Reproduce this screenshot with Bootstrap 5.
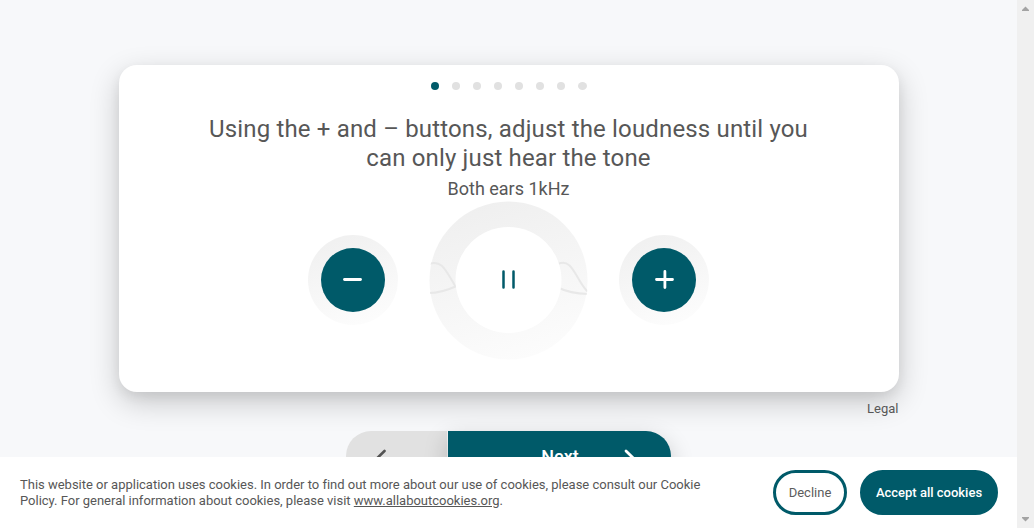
<!DOCTYPE html>
<html lang="en">
<head>
<meta charset="utf-8">
<meta name="viewport" content="width=device-width, initial-scale=1">
<title>Hearing test</title>
<link href="https://cdn.jsdelivr.net/npm/bootstrap@5.3.0/dist/css/bootstrap.min.css" rel="stylesheet">
<style>
  :root { --teal: #005a69; --ink: #575757; --soft: #e1e1e1; }
  body { font-family: Roboto, "Liberation Sans", sans-serif; color: var(--ink); background: #f7f8fa; }
  .stage { min-width: 0; padding-top: 65px; }
  .test-panel { width: 780px; height: 327px; border-radius: 18px; background: #fff; padding-top: 17px; box-shadow: 0 10px 30px rgba(0,0,0,.2), 0 5px 12px rgba(0,0,0,.06); }
  .steps { gap: 13px; height: 8px; }
  .steps span { width: 8px; height: 8px; border-radius: 50%; background: var(--soft); }
  .steps span:last-child { width: 9px; }
  .steps .current { background: var(--teal); }
  .test-title { width: 640px; margin-top: 25px; font-size: 24px; line-height: 29px; font-weight: 400; letter-spacing: .16px; }
  .test-sub { font-size: 18px; line-height: 22px; margin-top: 5px; }
  .controls { gap: 31px; margin-top: 1px; }
  .halo { width: 90px; height: 90px; margin-bottom: 1px; background: linear-gradient(160deg, #efefef, #fefefe); }
  .round-btn { width: 64px; height: 64px; background: var(--teal); }
  .legal { width: 780px; font-size: 13px; line-height: 16px; margin-top: 9px; }
  .pager { width: 325px; height: 50px; margin-top: 14px; gap: 1px; }
  .pager button { height: 50px; border: 0; padding: 0; }
  .prev { width: 101px; background: var(--soft); border-radius: 25px 0 0 25px; }
  .prev svg { margin-left: 30px; }
  .pager .next { width: 223px; padding: 0 35px 0 48px; background: var(--teal); color: #fff; font-size: 18px; font-weight: 500; border-radius: 0 25px 25px 0; box-shadow: 0 8px 24px rgba(0,0,0,.2); }
  .consent { right: 17px; height: 71px; background: #fff; padding: 0 19px 0 20px; z-index: 5; }
  .consent p { font-size: 13px; line-height: 16px; letter-spacing: -.01px; }
  .consent a { color: inherit; }
  .consent-actions { gap: 13px; }
  .consent button { height: 45px; border-radius: 23px; font-size: 13px; padding: 0; border: 3px solid var(--teal); }
  .decline { width: 74px; background: #fff; color: #5c5c5c; }
  .accept { width: 138px; background: var(--teal); color: #fff; font-weight: 500; }
  .rail { width: 17px; background: #f0f0f0; padding: 6px 0; }
</style>
</head>
<body class="vh-100 overflow-hidden d-flex">
<main class="stage flex-grow-1 d-flex flex-column align-items-center">
  <section class="test-panel d-flex flex-column align-items-center flex-shrink-0">
    <div class="steps d-flex"><span class="current"></span><span></span><span></span><span></span><span></span><span></span><span></span><span></span></div>
    <h1 class="test-title text-center mb-0">Using the + and – buttons, adjust the loudness until you<br>can only just hear the tone</h1>
    <div class="test-sub">Both ears 1kHz</div>
    <div class="controls d-flex align-items-center">
      <div class="halo rounded-circle d-flex align-items-center justify-content-center">
        <button class="round-btn border-0 rounded-circle p-0 d-flex align-items-center justify-content-center" aria-label="Quieter">
          <svg width="24" height="24" fill="none" stroke="#fff" stroke-width="2.8" stroke-linecap="round"><path d="M3.500 11.500H19.500"/></svg>
        </button>
      </div>
      <svg width="159" height="159" viewBox="0 0 159 159" fill="none">
        <defs>
          <linearGradient id="ringFill" x1=".3" y1="0" x2=".6" y2="1"><stop stop-color="#efefef"/><stop offset="1" stop-color="#fcfcfc"/></linearGradient>
          <clipPath id="ringClip"><circle cx="79.5" cy="79.5" r="79.5"/></clipPath>
        </defs>
        <circle cx="79.5" cy="79.5" r="79" fill="url(#ringFill)"/>
        <g clip-path="url(#ringClip)" stroke="#e8e8e8" stroke-width="2">
          <path d="M0 63C13 58 17 70 26.500 85.500C21 88 9 92 0 92"/>
          <path d="M129 63C144 56 147 80 159 91M130 87C138 91 148 92.500 159 93"/>
        </g>
        <circle cx="79.500" cy="79" r="53" fill="#fff"/>
        <path d="M74.500 70.500V86.500M84.500 70.500V86.500" stroke="#005a69" stroke-width="2.500" stroke-linecap="round"/>
      </svg>
      <div class="halo rounded-circle d-flex align-items-center justify-content-center">
        <button class="round-btn border-0 rounded-circle p-0 d-flex align-items-center justify-content-center" aria-label="Louder">
          <svg width="24" height="24" fill="none" stroke="#fff" stroke-width="2.8" stroke-linecap="round"><path d="M4.500 11.500H20.500M12.900 3.500V19.500"/></svg>
        </button>
      </div>
    </div>
  </section>
  <div class="legal text-end">Legal</div>
  <div class="pager d-flex flex-shrink-0">
    <button class="prev" aria-label="Back"><svg class="d-block" width="12" height="20" fill="none" stroke="#535353" stroke-width="2.600" stroke-linecap="round"><path d="M8.500 5L1.800 11.500L8.500 18"/></svg></button>
    <button class="next d-flex align-items-center"><span class="flex-grow-1 text-center">Next</span><svg width="12" height="20" fill="none" stroke="#fff" stroke-width="2.800" stroke-linecap="round"><path d="M2 5L8.700 11.500L2 18"/></svg></button>
  </div>
</main>
<div class="rail d-flex flex-column justify-content-between align-items-center flex-shrink-0">
  <svg width="7" height="5" fill="#a3a3a3"><path d="M0 5V4L3.500 .5L7 4V5Z"/></svg>
  <svg width="7" height="5" fill="#a3a3a3"><path d="M0 0V1L3.500 4.500L7 1V0Z"/></svg>
</div>
<footer class="consent position-fixed bottom-0 start-0 d-flex align-items-center">
  <p class="mb-0 text-nowrap">This website or application uses cookies. In order to find out more about our use of cookies, please consult our Cookie<br>Policy. For general information about cookies, please visit <a href="#">www.allaboutcookies.org</a>.</p>
  <div class="consent-actions d-flex ms-auto"><button class="decline">Decline</button><button class="accept">Accept all cookies</button></div>
</footer>
<script src="https://cdn.jsdelivr.net/npm/bootstrap@5.3.0/dist/js/bootstrap.bundle.min.js"></script>
</body>
</html>
